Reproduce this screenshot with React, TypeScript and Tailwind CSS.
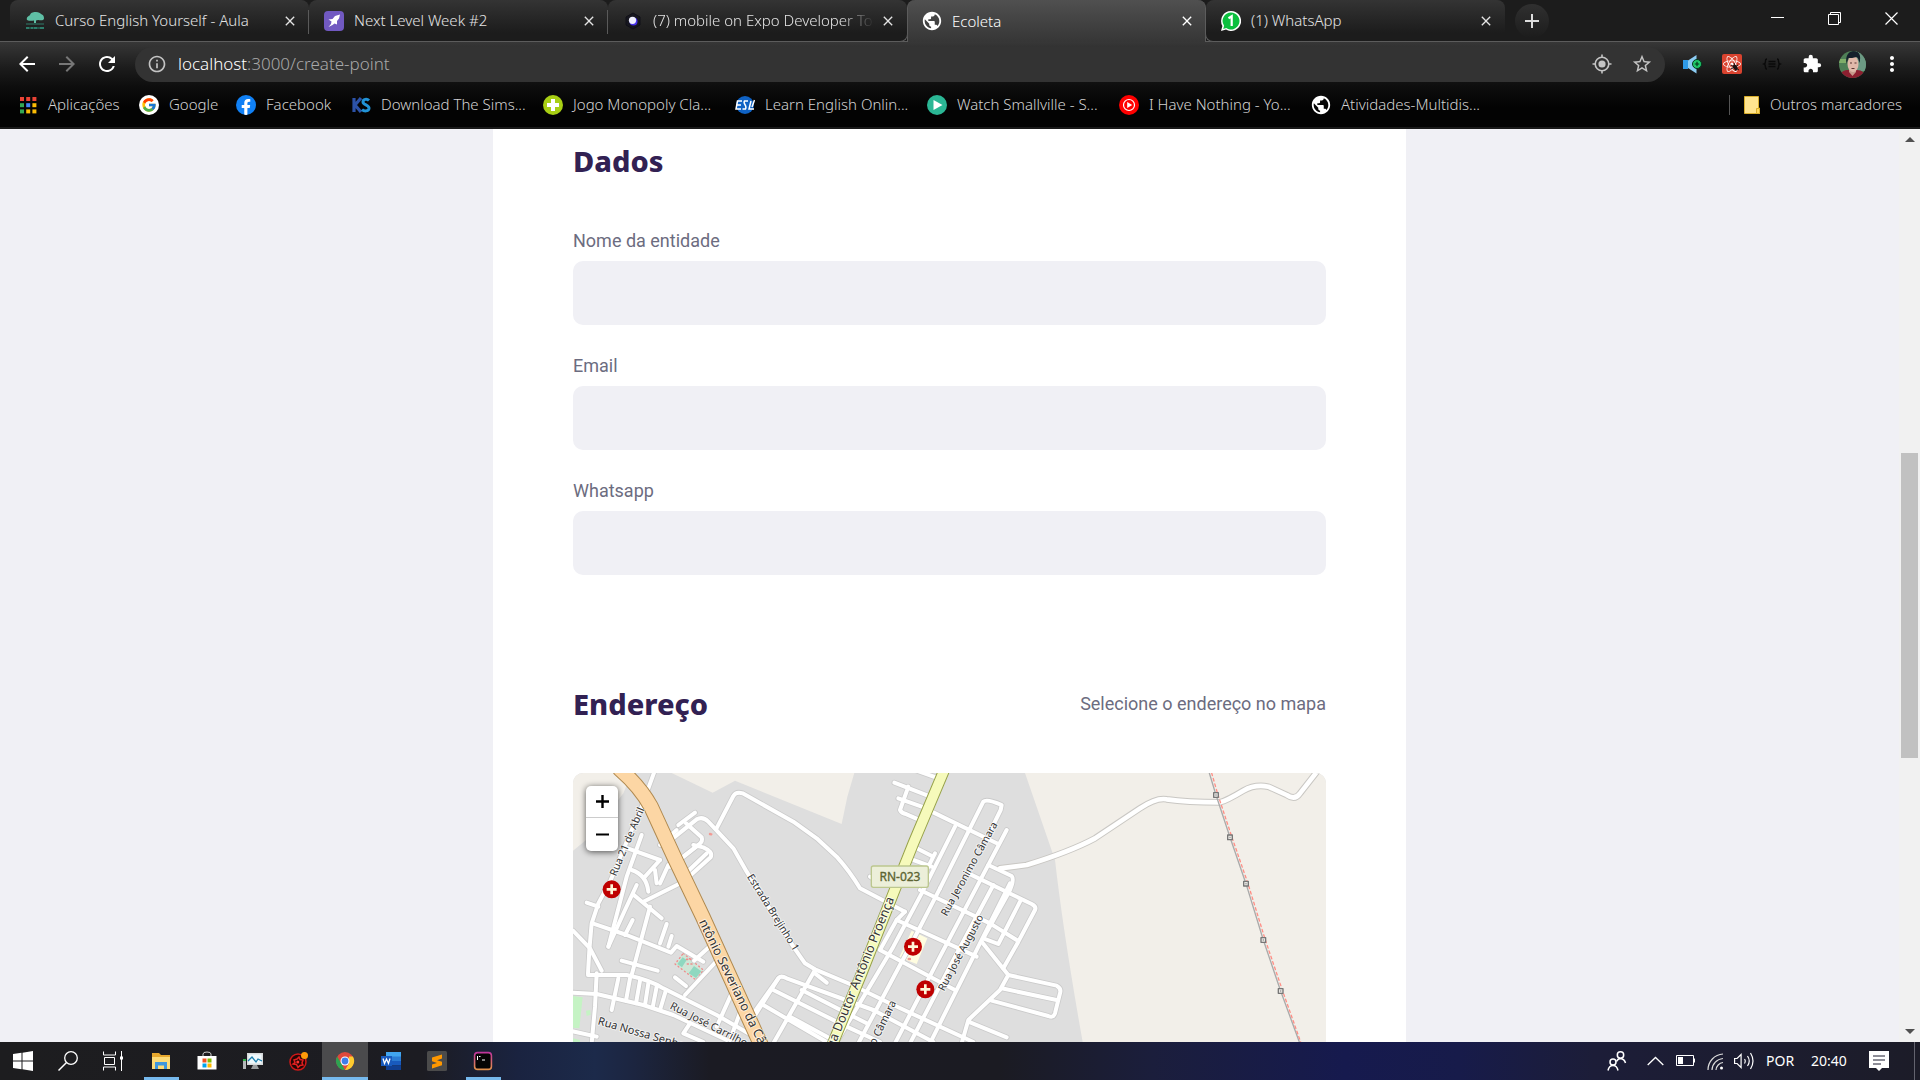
import type { ReactNode } from "react";
import { FcGoogle } from "react-icons/fc";
import { FaReact, FaFacebookF } from "react-icons/fa";
import {
  MdArrowBack,
  MdArrowForward,
  MdClose,
  MdExtension,
  MdInfoOutline,
  MdMoreVert,
  MdPublic,
  MdRefresh,
  MdStarBorder,
} from "react-icons/md";

/* ---------- favicons ---------- */

const TreeIcon = () => (
  <svg viewBox="0 0 20 20" className="size-5 shrink-0">
    <path d="M2 9C1 6 4 5 5 4c1-3 4-3 6-3 3 0 4 1 5 2 3 1 3 3 3 5-1 2-4 1-6 1l-2 .5V12H9V9.500C7 10 4 10 2 9Z" fill="#5fbfa5" />
    <path d="M1 12.500h18v.9H1zM1 16h18v2H1z" fill="#2e7d6b" />
    <path d="M4 17h2M8 17h1M12 17h3" stroke="#14352d" />
  </svg>
);

const RocketIcon = () => (
  <svg viewBox="0 0 20 20" className="size-5 shrink-0">
    <rect width="20" height="20" rx="4" fill="#7159c1" />
    <path d="M16 3.500 11 5 8.500 8 4.500 8.500 7.500 10.500 7 13 4.500 16 8.500 14 10.500 12.500 13 13.500 13 10 15 7.500Z" fill="#fff" />
  </svg>
);

const ExpoIcon = () => (
  <svg viewBox="0 0 20 20" className="size-5 shrink-0">
    <path d="m10 2 7 4v8l-7 4-7-4V6Z" fill="#17171f" stroke="#101018" />
    <circle cx="10.500" cy="10.500" r="4" fill="#4630eb" />
    <circle cx="9.500" cy="9.300" r="3.600" fill="#f1f1ff" />
  </svg>
);

const WhatsIcon = () => (
  <svg viewBox="0 0 20 20" className="size-5 shrink-0">
    <path d="M10 0a10 10 0 1 1-5 18.600L0 20l1.400-5A10 10 0 0 1 10 0Z" fill="#fff" />
    <path d="M10 1.500a8.500 8.500 0 1 1-4.700 15.600L2.200 18l.9-3.200A8.500 8.500 0 0 1 10 1.500Z" fill="#0bbf3e" />
    <path d="m7.500 7.200 3.200-1.900V15" stroke="#fff" strokeWidth="2.200" fill="none" />
  </svg>
);

const AppsIcon = () => {
  const colors = ["#ea4335", "#ea4335", "#ea4335", "#34a853", "#4285f4", "#fbbc05", "#34a853", "#fbbc05", "#fbbc05"];
  return (
    <svg viewBox="0 0 20 20" className="size-5 shrink-0">
      {colors.map((c, i) => (
        <rect key={i} x={2 + (i % 3) * 6.200} y={2 + Math.floor(i / 3) * 6.200} width="4" height="4" fill={c} />
      ))}
    </svg>
  );
};

const GoogleMark = () => (
  <span className="grid size-5 shrink-0 place-items-center rounded-full bg-white">
    <FcGoogle className="size-4" />
  </span>
);

const FacebookMark = () => (
  <span className="grid size-5 shrink-0 place-items-end justify-center overflow-hidden rounded-full bg-[#1080f5]">
    <FaFacebookF className="size-4 text-white" />
  </span>
);

const KsMark = () => (
  <svg viewBox="0 0 20 20" className="size-5 shrink-0">
    <path d="M3 3v14M10 3l-6 7 6 7" stroke="#2c52a8" strokeWidth="3.200" fill="none" />
    <path d="M18 5.500C16 3.500 12 4 12 7s6.500 3 6 6.500c-.5 3-5 3-7 1" stroke="#2193d6" strokeWidth="3" fill="none" />
  </svg>
);

const PlusMark = () => (
  <svg viewBox="0 0 20 20" className="size-5 shrink-0">
    <circle cx="10" cy="10" r="10" fill="#a8cf14" />
    <path d="M8 4h4v4h4v4h-4v4H8v-4H4V8h4Z" fill="#fff" />
  </svg>
);

const EslMark = () => (
  <svg viewBox="0 0 20 20" className="size-5 shrink-0">
    <circle cx="10" cy="10" r="9" fill="#0f62c4" />
    <path d="M7 6H2.500L1 14h5M2 10h4M13 6H9.500c-2 3 3 4 1 8H7.500M16 6l-2 8h5M17 12l2.500-7" stroke="#fff" strokeWidth="1.500" fill="none" />
  </svg>
);

const PlayMark = () => (
  <svg viewBox="0 0 20 20" className="size-5 shrink-0">
    <circle cx="10" cy="10" r="10" fill="#2bb795" />
    <path d="m6.500 5 9 5-9 5Z" fill="#fff" />
  </svg>
);

const YtMusicMark = () => (
  <svg viewBox="0 0 20 20" className="size-5 shrink-0">
    <circle cx="10" cy="10" r="10" fill="#f00" />
    <circle cx="10" cy="10" r="5.500" fill="none" stroke="#fff" strokeWidth="1.200" />
    <path d="m8.200 7 5 3-5 3Z" fill="#fff" />
  </svg>
);

const GlobeMark = () => <MdPublic className="size-[22px] shrink-0 -mx-px text-white" />;

const FolderMark = () => (
  <svg viewBox="0 0 20 20" className="size-5 shrink-0">
    <path d="M2.500 1.500h14V13h1v5.500h-15Z" fill="#ffe48f" stroke="#d9ae2b" />
    <path d="M14.500 18.500v-5h3v5Z" fill="#ffd75e" stroke="#d9ae2b" />
  </svg>
);

/* ---------- browser chrome ---------- */

type TabInfo = { title: string; icon: ReactNode; active?: boolean; fade?: boolean; line?: boolean };

const tabs: TabInfo[] = [
  { title: "Curso English Yourself - Aula", icon: <TreeIcon />, line: true },
  { title: "Next Level Week #2", icon: <RocketIcon />, line: true },
  { title: "(7) mobile on Expo Developer Tools", icon: <ExpoIcon />, fade: true },
  { title: "Ecoleta", icon: <GlobeMark />, active: true },
  { title: "(1) WhatsApp", icon: <WhatsIcon /> },
];

function Tab({ title, icon, active, fade, line }: TabInfo) {
  return (
    <div
      className={
        active
          ? "relative z-10 flex h-[42px] w-[299px] min-w-0 items-center rounded-t-lg border-x border-[#5c5c5c] bg-linear-to-b from-[#505050] to-[#363636] pr-2.5 pl-3.5 text-white"
          : "relative flex h-[41px] w-[299px] min-w-0 items-center rounded-t-lg bg-linear-to-b from-[#343434] to-[#1c1c1c] to-80% pr-[11px] pl-[15px] text-[#e4e4e4]"
      }
    >
      {icon}
      <span
        className={
          fade
            ? "ml-2.5 flex-1 overflow-hidden text-[15px] font-light whitespace-nowrap [mask-image:linear-gradient(to_right,#000_85%,transparent)]"
            : "ml-2.5 flex-1 overflow-hidden text-[15px] font-light whitespace-nowrap"
        }
      >
        {title}
      </span>
      <button aria-label={`Fechar ${title}`} className="ml-1.5 grid size-4 place-items-center">
        <MdClose className="size-4" />
      </button>
      {line && <span className="absolute top-2.5 right-0 h-6 w-px bg-[#5a5a5a]" />}
      {active && (
        <>
          <span className="absolute bottom-0 -left-2.5 size-2.5 rounded-br-lg border-r border-b border-[#5c5c5c] bg-[#1c1c1c]" />
          <span className="absolute -right-2.5 bottom-0 size-2.5 rounded-bl-lg border-b border-l border-[#5c5c5c] bg-[#1c1c1c]" />
        </>
      )}
    </div>
  );
}

function TabStrip() {
  return (
    <header className="flex h-[42px] shrink-0 bg-[linear-gradient(#1c1c1c_41px,#5c5c5c_41px)] pl-2.5">
      {tabs.map((t) => (
        <Tab key={t.title} {...t} />
      ))}
      <button aria-label="Nova guia" className="mt-1 ml-2.5 grid h-[34px] w-[34px] place-items-center rounded-full bg-linear-to-b from-[#303030] to-[#1c1c1c]">
        <svg viewBox="0 0 16 16" className="size-4">
          <path d="M8 1v14M1 8h14" stroke="#dcdcdc" strokeWidth="2" />
        </svg>
      </button>
      <div className="ml-auto flex h-9 items-center gap-11 pr-[22px] text-white">
        <button aria-label="Minimizar">
          <svg viewBox="0 0 13 13" className="size-[13px]"><path d="M0 5.500h13" stroke="currentColor" /></svg>
        </button>
        <button aria-label="Restaurar">
          <svg viewBox="0 0 13 13" className="size-[13px]"><path d="M.5 2.500h10v10H.5ZM2.500 2.500v-2h10v10h-2" fill="none" stroke="currentColor" /></svg>
        </button>
        <button aria-label="Fechar">
          <svg viewBox="0 0 13 13" className="size-[13px]"><path d="m.5.5 12 12M12.500.5l-12 12" stroke="currentColor" strokeWidth="1.200" /></svg>
        </button>
      </div>
    </header>
  );
}

function Toolbar() {
  return (
    <div className="flex h-11 shrink-0 items-center pr-[18px] pl-[17px]">
      <div className="flex gap-5 text-white">
        <button aria-label="Voltar" className="flex size-5 items-center justify-center"><MdArrowBack className="size-6 shrink-0" /></button>
        <button aria-label="Avançar" className="flex size-5 items-center justify-center text-[#777]"><MdArrowForward className="size-6 shrink-0" /></button>
        <button aria-label="Atualizar" className="flex size-5 items-center justify-center"><MdRefresh className="size-6 shrink-0" /></button>
      </div>
      <div className="ml-[18px] flex h-[35px] flex-1 items-center rounded-full bg-[#333] pr-3 pl-3 text-[#c4c4c4]">
        <MdInfoOutline className="size-5 shrink-0" />
        <a href="#create-point" className="ml-[11px] flex-1 text-[17px] font-light text-[#a8a8a8]">
          <span className="text-white">localhost</span>:3000/create-point
        </a>
        <button aria-label="Localização">
          <svg viewBox="0 0 20 20" className="size-5" fill="none" stroke="currentColor" strokeWidth="1.600">
            <circle cx="10" cy="10" r="6.800" />
            <circle cx="10" cy="10" r="3.600" fill="currentColor" stroke="none" />
            <path d="M10 .5v3M10 16.500v3M.5 10h3M16.500 10h3" />
          </svg>
        </button>
        <button aria-label="Favoritar" className="ml-[19px]"><MdStarBorder className="size-[22px]" /></button>
      </div>
      <div className="ml-[17px] flex items-center gap-5">
        <button aria-label="Volume">
          <svg viewBox="0 0 20 20" className="size-5">
            <path d="M1 6h5v9H1z" fill="#2f9be8" />
            <path d="M6 6.500 14.500 1v18.500L6 14Z" fill="#8ccdf5" />
            <circle cx="15" cy="10" r="4.500" fill="#20c96a" stroke="#06351c" />
            <path d="M15 7.800v4.400M12.800 10h4.400" stroke="#06351c" strokeWidth="1.200" />
          </svg>
        </button>
        <button aria-label="React DevTools" className="relative grid size-5 place-items-center rounded-xs bg-[#d9432f] text-white">
          <FaReact className="size-[18px]" />
          <svg viewBox="0 0 10 10" className="absolute right-0.5 bottom-0.5 size-2.5">
            <ellipse cx="5" cy="5.500" rx="2" ry="3" transform="rotate(-35 5 5)" fill="#1b1212" />
            <path d="m1 3 8 5M1 7l7-4M4 1l2 8" stroke="#1b1212" />
          </svg>
        </button>
        <button aria-label="JSON">
          <svg viewBox="0 0 20 20" className="size-5" fill="none" stroke="#0a0a0a" strokeWidth="1.400">
            <path d="M5 5C2 5 5 9 2 10c3 1 0 5 3 5M15 5c3 0 0 4 3 5-3 1 0 5-3 5M6.500 7.500h7M6.500 10h7M6.500 12.500h7" />
          </svg>
        </button>
        <button aria-label="Extensões" className="text-white"><MdExtension className="size-5" /></button>
      </div>
      <button aria-label="Perfil" className="ml-[17px]">
        <svg viewBox="0 0 27 27" className="size-[27px] rounded-full">
          <rect width="27" height="27" fill="#4f7f56" />
          <path d="M17 0h10v20H17Z" fill="#6c9a84" />
          <path d="M0 8h8v4H0Z" fill="#7fae6a" />
          <path d="M0 27c1-7 6-8 9-8h9c5 0 8 3 9 8Z" fill="#8c1f30" />
          <path d="M10 16h7v5l-3.500 4L10 21Z" fill="#c79a8c" />
          <ellipse cx="14" cy="13" rx="5.500" ry="8" fill="#e0b9aa" />
          <path d="M7.500 13C6 4 10 0 15 0s7.500 4 5.500 12c-1-3-1-5-3-6-3 1-6 1-8 1-1 2-1 3-2 6Z" fill="#15202c" />
          <path d="M11 12h2M15.500 12h2M12.500 17.500h3" stroke="#5b3733" />
        </svg>
      </button>
      <button aria-label="Menu" className="ml-4 flex size-5 items-center justify-center text-white"><MdMoreVert className="size-6 shrink-0" /></button>
    </div>
  );
}

const wide = "ml-2.5 w-[142px] whitespace-nowrap";
const bookmarks = [
  { label: "Aplicações", icon: <AppsIcon />, cls: "ml-2.5 w-[71px] whitespace-nowrap" },
  { label: "Google", icon: <GoogleMark />, cls: "ml-2.5 w-[47px] whitespace-nowrap" },
  { label: "Facebook", icon: <FacebookMark />, cls: "ml-2.5 w-[65px] whitespace-nowrap" },
  { label: "Download The Sims...", icon: <KsMark />, cls: wide },
  { label: "Jogo Monopoly Cla...", icon: <PlusMark />, cls: wide },
  { label: "Learn English Onlin...", icon: <EslMark />, cls: wide },
  { label: "Watch Smallville - S...", icon: <PlayMark />, cls: wide },
  { label: "I Have Nothing - Yo...", icon: <YtMusicMark />, cls: wide },
  { label: "Atividades-Multidis...", icon: <GlobeMark />, cls: wide },
];

function BookmarkBar() {
  return (
    <nav className="flex h-[43px] shrink-0 items-center border-b-2 border-[#191919] pr-[18px] pb-1 pl-[18px] text-[15px] font-light text-[#d2d2d2]">
      <div className="flex gap-5">
        {bookmarks.map((b) => (
          <a key={b.label} href="#bookmark" className="flex items-center">
            {b.icon}
            <span className={b.cls}>{b.label}</span>
          </a>
        ))}
      </div>
      <a href="#outros" className="ml-auto flex items-center whitespace-nowrap">
        <span className="mr-3 h-5 w-px bg-[#555]" />
        <FolderMark />
        <span className="ml-2">Outros marcadores</span>
      </a>
    </nav>
  );
}

/* ---------- map ---------- */

const streets = [
  "M285 30 245 140 200 245 150 365 115 430 95 490 88 570 84 640",
  "M245 225 200 350 145 560",
  "M195 262 300 300",
  "M405 158 355 195",
  "M330 242 410 178Q428 168 445 185L520 265 560 335 700 560 735 610 765 628 870 672 1000 735",
  "M378 190 425 232Q430 245 415 255L330 320",
  "M400 255 430 262Q460 275 452 292L370 365 250 425",
  "M350 210 300 255",
  "M440 280 372 345",
  "M415 255 352 305",
  "M300 300 255 350M325 315 300 370M285 330 290 370M215 330Q260 345 265 395",
  "M468 208 520 108Q528 94 548 100L700 185 770 235 830 290Q870 335 900 385L1035 455",
  "M80 428 115 440",
  "M98 490 200 525 333 578 350 558 430 605",
  "M230 375 195 450 145 560M218 402 305 475M270 440 215 645M218 480 195 525M320 492 300 550M335 528 325 560",
  "M185 602 293 632",
  "M448 560 402 602M480 592 375 705M345 652 378 678",
  "M39 512 90 565 125 632",
  "M84 645 200 645Q270 660 310 685L470 765 610 846",
  "M110 640 105 740 95 850",
  "M39 698 110 702 250 735 340 765 500 840",
  "M175 655 155 750M210 655 198 722M240 662 228 730M265 670 255 735M290 680 278 742M318 690 300 750",
  "M30 812 110 830M390 790 370 820 430 846M515 700 470 800M550 730 510 840",
  "M580 760 655 655Q662 645 680 655L940 750",
  "M640 690 860 800M610 735 800 846M765 630 640 850M725 690 920 790M800 668 765 640M655 655 570 790M690 770 830 846",
  "M1003 68 1125 115M1045 80 1020 150Q1025 160 1040 163L1090 185M1015 115 1100 145",
  "M1065 30 1150 60",
  "M1115 155 1315 252",
  "M1140 385 1270 125Q1280 115 1325 135L1322 150 1290 215",
  "M1140 385 1060 540 895 850",
  "M1340 210 1290 305 1140 590 1005 850",
  "M1185 200 1085 400 1000 560 830 846",
  "M1070 265 1120 290M1060 300 1115 320M1125 280 1100 330",
  "M1350 370 1240 590 1140 790 1110 850",
  "M1300 375 1180 600 1050 850",
  "M1080 390 1290 490 1370 540",
  "M1225 340 1415 432Q1430 440 1425 450L1375 545 1330 625",
  "M1010 480 1250 590",
  "M960 570 1185 690",
  "M1035 455 1010 480 960 570",
  "M1000 735 1240 846M940 750 1120 846M860 800 960 846",
  "M930 350 960 370",
  "M1285 315 1355 348Q1365 360 1345 400L1270 535 1315 552 1380 425",
  "M1265 545 1345 645 1490 677Q1505 685 1500 700L1485 760Q1480 775 1465 768L1295 722",
  "M1325 685 1490 720M1345 645 1320 690 1225 780 1205 850M1225 785 1340 832",
];

const countryRoad =
  "M1320 325 1400 315Q1530 275 1605 235L1740 145Q1790 112 1820 118 1880 127 1980 127 2000 122 2050 92 2085 72 2125 80L2180 105Q2205 122 2220 100L2275 30";
const orangeRoad = "M180 28Q240 80 273 140L342 290 428 470 608 866";
const yellowRoad = "M1157 20 1060 250 1000 400 905 640 812 866";
const pylons = [[1968, 105], [2010, 232], [2058, 371], [2110, 540], [2162, 693]];
const clinics = [[155, 388], [1059, 560], [1096, 688]];

const mapLabels = [
  { text: "Rua 21 de Abril", x: 168, y: 350, r: -67, s: 31 },
  { text: "Estrada Brejinho 1", x: 560, y: 350, r: 58, s: 31 },
  { text: "ntônio Severiano da Câmara", x: 416, y: 485, r: 64, s: 38 },
  { text: "Rua Doutor Antônio Proença", x: 812, y: 890, r: -68, s: 38 },
  { text: "Rua Jeronimo Câmara", x: 1160, y: 470, r: -61, s: 31 },
  { text: "Rua José Augusto", x: 1152, y: 695, r: -62, s: 31 },
  { text: "Rua José Carrilho", x: 328, y: 745, r: 27, s: 32 },
  { text: "Rua Nossa Senhora", x: 112, y: 793, r: 16, s: 33 },
  { text: "Jeronimo Câmara", x: 895, y: 962, r: -64, s: 32 },
];

function StreetMap() {
  return (
    <svg viewBox="0 0 753 269" preserveAspectRatio="xMidYMin slice" className="block h-full w-full" role="img" aria-label="Mapa">
      <g transform="scale(.33333) translate(-39 -39)" strokeLinecap="round" strokeLinejoin="round" fill="none">
        <path d="M39 39H2298V846H39Z" fill="#dedede" />
        <path d="M39 39H215L190 100 90 230 39 272Z" fill="#f2efe9" />
        <path d="M335 39 458 98 525 62 845 192 862 110 883 39Z" fill="#f2efe9" />
        <path d="M1395 39 1485 300Q1510 520 1568 846H2298V39Z" fill="#f2efe9" />
        <path d="M39 708 68 712 58 805 39 803ZM39 835 60 840V846H39ZM78 752 90 750 92 764 80 768Z" fill="#c5f3c4" />
        <path d="M370 580 430 630 408 660 345 612Z" fill="#cfe5d6" stroke="#f08c8c" strokeWidth="4" strokeDasharray="3 9" />
        <path d="m368 592 12 8-14 22-14-10ZM402 618l22 16-16 20-22-14Z" fill="#8fd8c0" />
        <path d="M380 598h22M382 612h18" stroke="#f08c8c" strokeWidth="5" strokeDasharray="3 8" />
        <path d="M1055 512 1102 535 1070 612 1018 592Z" fill="#fffde0" />
        <path d="M88 612v30M450 222l8 2M1046 597h10" stroke="#f29a94" strokeWidth="7" strokeDasharray="4 7" />
        {streets.map((d) => <path key={d} d={d} stroke="#cbcbcb" strokeWidth="17" />)}
        <path d={countryRoad} stroke="#c9c7c3" strokeWidth="20" />
        {streets.map((d) => <path key={d} d={d} stroke="#fff" strokeWidth="12" />)}
        <path d={countryRoad} stroke="#fff" strokeWidth="14" />
        <path d={yellowRoad} stroke="#98a34a" strokeWidth="35" />
        <path d={yellowRoad} stroke="#f6fabb" strokeWidth="29" />
        <path d={orangeRoad} stroke="#b08a50" strokeWidth="47" />
        <path d={orangeRoad} stroke="#fcd6a4" strokeWidth="41" />
        <path d="M1948 39 1968 105 2010 232 2058 371 2110 540 2162 693 2218 846" stroke="#aaa" strokeWidth="4" />
        <path d="M1955 39 1974 105 2016 232 2064 371 2116 540 2168 693 2222 846" stroke="#ff8f86" strokeWidth="4" strokeDasharray="8 9" />
        {pylons.map(([x, y]) => (
          <g key={x}>
            <rect x={x - 7} y={y - 7} width="14" height="14" fill="#e8e6e2" stroke="#777" strokeWidth="4" />
            <circle cx={x} cy={y} r="2" fill="#888" />
          </g>
        ))}
        {mapLabels.map((l) => (
          <text
            key={l.text + l.x}
            transform={`translate(${l.x} ${l.y}) rotate(${l.r})`}
            fontSize={l.s}
            fill="#333"
            stroke="#fff"
            strokeOpacity=".6"
            strokeWidth="6"
            paintOrder="stroke"
            fontFamily='"Noto Sans", sans-serif'
          >
            {l.text}
          </text>
        ))}
        <rect x="934" y="318" width="171" height="64" rx="6" fill="#ecefd9" stroke="#bcc78f" strokeWidth="4" />
        <text x="1020" y="363" textAnchor="middle" fontSize="36" fill="#5c6432" stroke="#5c6432" strokeWidth="1" fontFamily='"Noto Sans", sans-serif'>RN-023</text>
        {clinics.map(([x, y]) => (
          <g key={x}>
            <circle cx={x} cy={y} r="27" fill="#bf0000" />
            <path d={`M${x - 15} ${y}h30M${x} ${y - 15}v30`} stroke="#fff6d8" strokeWidth="8" strokeLinecap="butt" />
          </g>
        ))}
      </g>
    </svg>
  );
}

/* ---------- page ---------- */

const fields = [
  { id: "name", label: "Nome da entidade", type: "text" },
  { id: "email", label: "Email", type: "email" },
  { id: "whatsapp", label: "Whatsapp", type: "text" },
];

const heading = "font-[Noto_Sans,sans-serif] text-[29px] leading-9 font-extrabold text-[#322153]";

function PageForm() {
  return (
    <form className="mx-auto flex h-full w-full max-w-[913px] flex-col bg-white px-20 pt-3.5 font-[Roboto,sans-serif] text-lg leading-5 text-[#6c6c80]">
      <h2 className={heading}>Dados</h2>
      <div className="mt-[52px] flex flex-col gap-[31px]">
        {fields.map((f) => (
          <div key={f.id} className="flex flex-col gap-2.5">
            <label htmlFor={f.id}>{f.label}</label>
            <input id={f.id} type={f.type} className="h-16 w-full rounded-[10px] bg-[#f0f0f5] px-5 outline-none" />
          </div>
        ))}
      </div>
      <div className="mt-[111px] flex items-center justify-between">
        <h2 className={heading}>Endereço</h2>
        <span>Selecione o endereço no mapa</span>
      </div>
      <div className="relative mt-[51px] min-h-0 flex-1 overflow-hidden rounded-t-[10px]">
        <StreetMap />
        <div className="absolute top-[13px] left-[13px] flex w-8 flex-col rounded-[5px] bg-white text-black shadow-[0_1px_6px_rgba(0,0,0,0.65)]">
          <button type="button" aria-label="Aproximar" className="grid h-8 place-items-center border-b border-[#ccc]">
            <svg viewBox="0 0 13 13" className="size-[13px]"><path d="M6.500 0v13M0 6.500h13" stroke="currentColor" strokeWidth="2.400" /></svg>
          </button>
          <button type="button" aria-label="Afastar" className="grid h-[33px] place-items-center">
            <svg viewBox="0 0 13 13" className="size-[13px]"><path d="M0 6.500h13" stroke="currentColor" strokeWidth="2" /></svg>
          </button>
        </div>
      </div>
    </form>
  );
}

function Scrollbar() {
  return (
    <div className="flex w-[21px] shrink-0 flex-col items-center bg-[#f1f1f1]">
      <button aria-label="Rolar para cima" className="grid h-[21px] w-full place-items-center">
        <svg viewBox="0 0 10 5" className="h-[5px] w-2.5"><path d="m0 5 5-5 5 5Z" fill="#505050" /></svg>
      </button>
      <div className="flex-[303]" />
      <div className="w-[17px] flex-[305] bg-[#c1c1c1]" />
      <div className="flex-[263]" />
      <button aria-label="Rolar para baixo" className="grid h-[21px] w-full place-items-center">
        <svg viewBox="0 0 10 5" className="h-[5px] w-2.5"><path d="m0 0 5 5 5-5Z" fill="#505050" /></svg>
      </button>
    </div>
  );
}

/* ---------- taskbar ---------- */

const S = ({ children }: { children: ReactNode }) => (
  <svg viewBox="0 0 20 20" className="size-5">{children}</svg>
);

const systemApps = [
  {
    name: "Iniciar",
    icon: <S><path d="m0 3 8.500-1.200v7.700H0ZM9.500 1.700 20 0v9.500H9.500ZM0 10.500h8.500v7.700L0 17ZM9.500 10.500H20V20L9.500 18.300Z" fill="#fff" /></S>,
  },
  {
    name: "Pesquisar",
    icon: <S><circle cx="13" cy="7" r="6.300" fill="none" stroke="#fff" strokeWidth="1.300" /><path d="M8.500 11.500.5 19.500" stroke="#fff" strokeWidth="1.500" /></S>,
  },
  {
    name: "Visão de tarefas",
    icon: <S><path d="M.5.5V4h12V.500M.5 19.500V16h12v3.500M1.500 6.500h10v7h-10ZM18.500 0v20" fill="none" stroke="#fff" /><path d="M17 5.500h3v3h-3z" fill="#fff" /></S>,
  },
];

const apps = [
  {
    name: "Explorador de Arquivos",
    mark: "half",
    icon: <S><path d="M1 2h7l2 2h9v14H1Z" fill="#e8a92e" /><path d="M1 6h18v12H1Z" fill="#fddb77" /><path d="M4 11h12v7h-3v-3.500H7V18H4Z" fill="#3f97dd" /></S>,
  },
  {
    name: "Microsoft Store",
    icon: <S><path d="M6 6V3q0-2 4-2t4 2v3" fill="none" stroke="#ccc" /><path d="M.5 5h19v13.500h-19Z" fill="#fff" /><path d="M5.500 7.500h4v4h-4z" fill="#f25022" /><path d="M10.500 7.500h4v4h-4z" fill="#7fba00" /><path d="M5.500 12.500h4v4h-4z" fill="#00a4ef" /><path d="M10.500 12.500h4v4h-4z" fill="#ffb900" /></S>,
  },
  {
    name: "Monitor",
    icon: <S><path d="M4 2h16v12H4Z" fill="#d7dadb" /><path d="M5.500 3.500h13v9h-13Z" fill="#eef8fc" /><path d="m5 10 4-4 4 5 2-3 4 2" stroke="#1b7fae" fill="none" strokeWidth="1.300" /><path d="M10 14h4l2 4H8Z" fill="#9a9d9f" /><path d="M0 9h3v9H0Z" fill="#b5b8ba" /><path d="M0 8h3v2H0Z" fill="#34b24a" /></S>,
  },
  {
    name: "Ferramenta",
    icon: <S><circle cx="9" cy="11" r="8" fill="#240606" stroke="#d01818" strokeWidth="1.500" /><path d="m5 9 3-1 2-2 1 2.500 3 .5-1 3 1 2-3 .5-2 2-1.500-3L4 13l2-1.500Z" fill="none" stroke="#e32020" strokeWidth="1.500" /><circle cx="8.800" cy="11" r="1.500" fill="#f33" /><circle cx="15.500" cy="4.500" r="3.500" fill="#ff9c0a" /></S>,
  },
  {
    name: "Google Chrome",
    mark: "full",
    icon: <S><circle cx="10" cy="10" r="9" fill="#e0483b" /><path d="M2.200 5.500 10 19a9 9 0 0 1-7.800-13.500Z" fill="#2da351" /><path d="M17.900 5.500A9 9 0 0 1 10 19l4-6.500V5.500Z" fill="#fdcb2e" /><circle cx="10" cy="10" r="4.500" fill="#fff" /><circle cx="10" cy="10" r="3.400" fill="#3f7de8" /></S>,
  },
  {
    name: "Word",
    icon: <S><path d="M5 1h15v5H5Z" fill="#41a5ee" /><path d="M5 5.500h15V10H5Z" fill="#2b7cd3" /><path d="M5 10h15v4.500H5Z" fill="#185abd" /><path d="M5 14.500h15V19H5Z" fill="#103f91" /><path d="M0 5h11v10H0Z" fill="#185abd" /><path d="m2 7.500 1.500 5L5.500 8l2 4.500 1.500-5" stroke="#fff" strokeWidth="1.300" fill="none" /></S>,
  },
  {
    name: "Sublime Text",
    icon: <S><rect width="20" height="20" rx="1.500" fill="#4b4b4b" /><path d="m5 6.500 10-3v4l-5 1.700 5 1.600v3.500L5 17.500v-4l5-1.500-5-1.700Z" fill="#ff9800" /></S>,
  },
  {
    name: "Terminal",
    mark: "half",
    icon: (
      <S>
        <defs><linearGradient id="term" x2="0" y2="1"><stop stopColor="#c0359c" /><stop offset="1" stopColor="#e2924c" /></linearGradient></defs>
        <rect x="1.600" y="1.600" width="16.800" height="16.800" rx="3" fill="#050505" stroke="url(#term)" strokeWidth="1.600" />
        <path d="M4.500 5v4M6 5.500h1.500M9 9h3" stroke="#fff" />
      </S>
    ),
  },
];

function Taskbar() {
  return (
    <footer className="flex h-[38px] shrink-0 bg-[linear-gradient(to_right,#1d1d1f_0%,#1c1c22_22%,#1a2340_27%,#1c2a4a_31%,#1c2540_33%,#1b1b23_37%,#1b1b22_52%,#1b1e3c_60%,#161a4e_70%,#171b4a_76%,#1c1d38_83%,#1c1c28_100%)] text-white">
      <div className="mr-[3px] flex">
        {systemApps.map((a) => (
          <button key={a.name} aria-label={a.name} className="flex w-[45px] justify-center pt-[9px]">
            {a.icon}
          </button>
        ))}
      </div>
      {apps.map((a) => (
        <button
          key={a.name}
          aria-label={a.name}
          className={
            a.mark === "full"
              ? "flex h-full w-[46px] flex-col items-center border-b-[3px] border-[#76b9ed] bg-[#4b4b4d] pt-[9px]"
              : "relative flex h-full w-[46px] flex-col items-center pt-[9px]"
          }
        >
          {a.icon}
          {a.mark === "half" && <span className="absolute bottom-0 h-[3px] w-[35px] bg-[#76b9ed]" />}
        </button>
      ))}
      <div className="ml-auto flex items-center text-sm">
        <button aria-label="Pessoas">
          <svg viewBox="0 0 20 20" className="size-5" fill="none" stroke="#fff" strokeWidth="1.500">
            <circle cx="13.500" cy="4" r="3.200" /><circle cx="6" cy="11" r="3" />
            <path d="M9.500 10.500Q11 7.500 13.500 7.500 17.500 8 18.500 12M1 19.500q1-5 5-5t5 5" />
          </svg>
        </button>
        <button aria-label="Ícones ocultos" className="ml-5">
          <svg viewBox="0 0 17 17" className="size-[17px]" fill="none" stroke="#fff" strokeWidth="1.300"><path d="m.7 12 7.800-7.500 7.800 7.500" /></svg>
        </button>
        <button aria-label="Bateria" className="ml-3">
          <svg viewBox="0 0 19 12" className="h-3 w-[19px]"><path d="M.5.5h17v10H.5ZM18.500 3.500v4" fill="none" stroke="#fff" /><path d="M2 2h5v7H2z" fill="#fff" /></svg>
        </button>
        <button aria-label="Rede" className="ml-3">
          <svg viewBox="0 0 17 17" className="size-[17px]" fill="none" stroke="#ddd" strokeWidth="1.200">
            <path d="M1 17A16 16 0 0 1 16 1M5 17A12 12 0 0 1 16 5.500M9 17a8 8 0 0 1 7-7.500" /><circle cx="14.500" cy="15" r="1.500" fill="#fff" stroke="none" />
          </svg>
        </button>
        <button aria-label="Som" className="ml-2.5">
          <svg viewBox="0 0 20 18" className="h-[18px] w-5" fill="none" stroke="#fff" strokeWidth="1.200">
            <path d="M.6 6.500h2.500l4-4v13l-4-4H.600ZM10.500 7q1.500 2 0 4.500M13.500 4q3.500 5 0 10M16.500 1q5 8 0 16" />
          </svg>
        </button>
        <button className="ml-3 w-7">POR</button>
        <time className="ml-[17px] w-9 text-center">20:40</time>
        <button aria-label="Notificações" className="ml-[22px]">
          <svg viewBox="0 0 20 20" className="size-5"><path d="M0 0h20v17h-7l-3 3-3-3H0Z" fill="#fff" /><path d="M4 5h12M4 9h12M4 13h8" stroke="#1c1c30" /></svg>
        </button>
        <span className="mr-[5px] ml-[25px] h-[38px] w-px bg-[#63636e]" />
      </div>
    </footer>
  );
}

export default function App() {
  return (
    <div className="flex h-screen flex-col overflow-hidden bg-[#f0f0f5] font-[Noto_Sans,sans-serif]">
      <TabStrip />
      <div className="shrink-0 bg-[linear-gradient(#373737,#1c1c1c_26px,#0e0e0e_44px,#030303_66px)]">
        <Toolbar />
        <BookmarkBar />
      </div>
      <div className="flex min-h-0 flex-1">
        <main className="min-w-0 flex-1">
          <PageForm />
        </main>
        <Scrollbar />
      </div>
      <Taskbar />
    </div>
  );
}
